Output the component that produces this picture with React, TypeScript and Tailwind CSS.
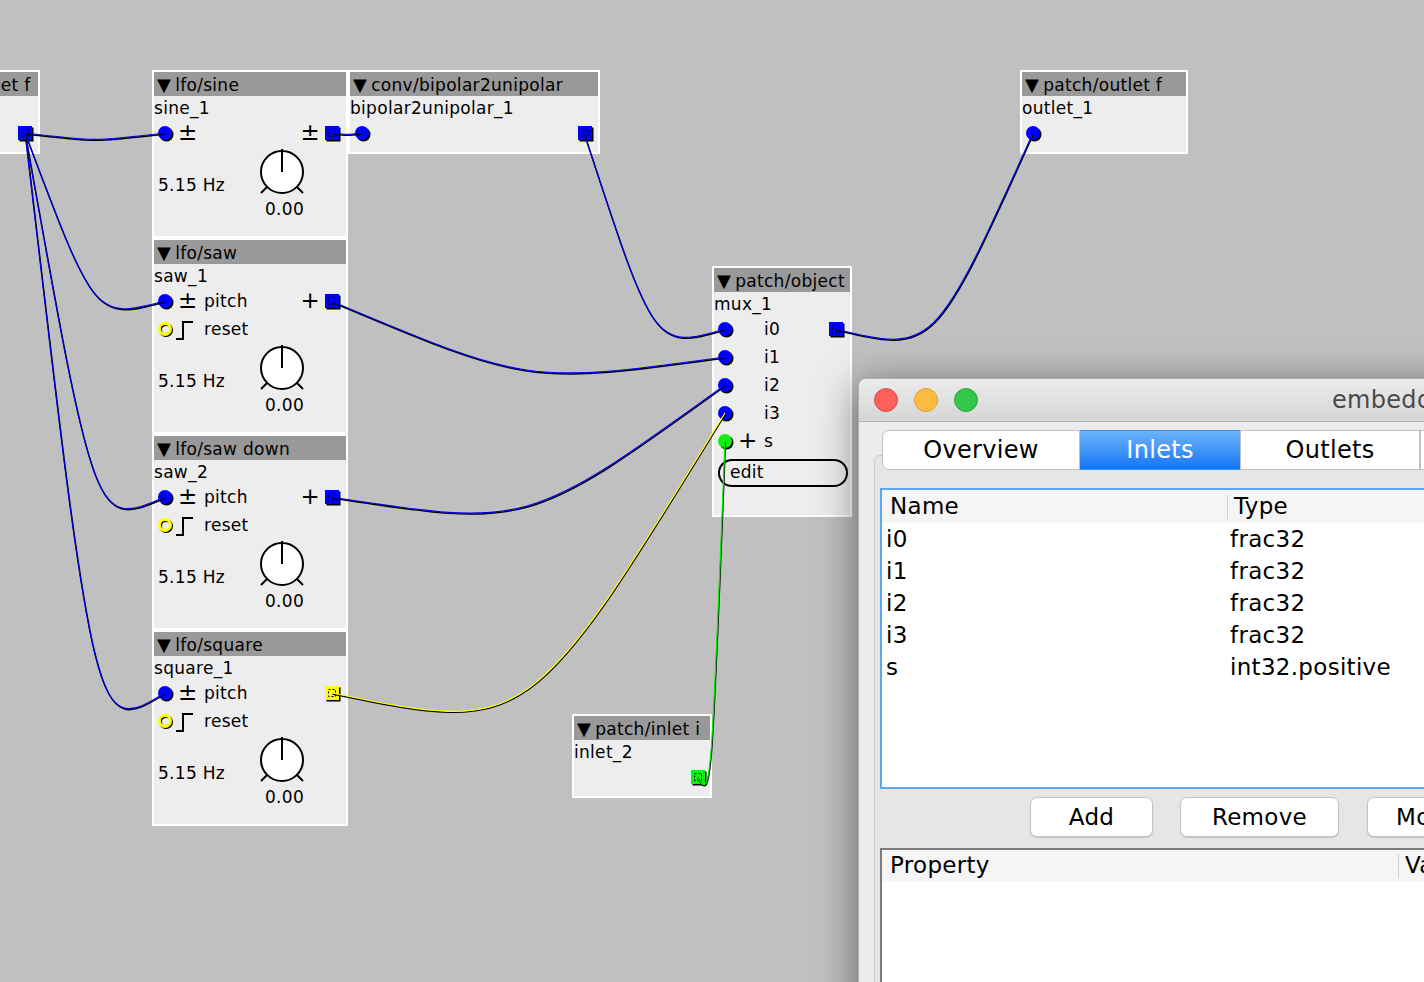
import React from "react";

const canvasFont = "font-['DejaVu_Sans',sans-serif] tracking-[0.3px]";

function InletCircle({ color }: { color: string }) {
  return (
    <svg width="18" height="18" viewBox="0 0 18 18" className="shrink-0">
      <circle cx="9.5" cy="9.5" r="7" fill="#000" />
      <circle cx="8" cy="8" r="7" fill={color} />
    </svg>
  );
}

function BoolInlet() {
  return (
    <svg width="18" height="18" viewBox="0 0 18 18" className="shrink-0">
      <circle cx="9" cy="9" r="5.5" fill="none" stroke="#000" strokeWidth="3" />
      <circle cx="8" cy="8" r="5.5" fill="none" stroke="#ffff00" strokeWidth="3" />
    </svg>
  );
}

function OutletSquare({ color }: { color: string }) {
  return (
    <svg width="18" height="18" viewBox="0 0 18 18" className="shrink-0">
      <rect x="2.5" y="2.5" width="14" height="14" fill="#000" />
      <rect x="1" y="1" width="14" height="14" fill={color} />
      <rect x="4.5" y="4.5" width="7" height="7" fill="none" stroke="#000" strokeWidth="1" strokeDasharray="2 2" />
    </svg>
  );
}

function StepIcon() {
  return (
    <svg width="20" height="22" viewBox="0 0 20 22" className="shrink-0 -ml-[2px]">
      <path d="M0 20 H7 V3 H17" fill="none" stroke="#000" strokeWidth="2" />
    </svg>
  );
}

function Knob() {
  return (
    <svg width="50" height="48" viewBox="0 0 50 48">
      <line x1="11" y1="38" x2="4" y2="45" stroke="#000" strokeWidth="2" />
      <line x1="39" y1="38" x2="46" y2="45" stroke="#000" strokeWidth="2" />
      <circle cx="25" cy="24" r="21" fill="#fff" stroke="#000" strokeWidth="2" />
      <line x1="25" y1="24" x2="25" y2="1" stroke="#000" strokeWidth="2" />
    </svg>
  );
}

function Header({ title }: { title: string }) {
  return (
    <div className="h-[24px] bg-[#999999] pl-[3px] pt-[3px] flex items-center whitespace-nowrap text-[17px] leading-[21px]">
      <span className="text-[18px] mr-[4px] -mt-[2px]">▼</span>
      <span>{title}</span>
    </div>
  );
}

function Name({ name }: { name: string }) {
  return <div className="h-[24px] leading-[24px] text-[17px] whitespace-nowrap">{name}</div>;
}

function LfoBox({
  top,
  title,
  name,
  outSym,
  withReset,
  outColor,
}: {
  top: number;
  title: string;
  name: string;
  outSym: string;
  withReset: boolean;
  outColor: string;
}) {
  return (
    <div
      className={`absolute left-[152px] w-[196px] border-2 border-white bg-[#ededed] ${canvasFont} text-black`}
      style={{ top }}
    >
      <Header title={title} />
      <Name name={name} />
      <div className="h-[28px] flex items-center text-[17px]">
        <div className="pl-[3px]">
          <InletCircle color="#0000ff" />
        </div>
        <span className="ml-[3px] w-[23px] text-[23px] leading-none -mt-[3px]">±</span>
        <span className="ml-[3px]">{withReset ? "pitch" : ""}</span>
        <span className="ml-auto text-[23px] leading-none -mt-[3px] mr-[4px]">{outSym}</span>
        <div className="mr-[4px]">
          <OutletSquare color={outColor} />
        </div>
      </div>
      {withReset && (
        <div className="h-[28px] flex items-center text-[17px]">
          <div className="pl-[3px]">
            <BoolInlet />
          </div>
          <span className="ml-[3px] w-[23px] flex">
            <StepIcon />
          </span>
          <span className="ml-[3px]">reset</span>
        </div>
      )}
      <div className="h-[88px] flex items-start text-[17px]">
        <span className="pl-[4px] mt-[27px] leading-[20px] whitespace-nowrap">5.15 Hz</span>
        <div className="ml-auto mr-[39px] flex flex-col items-center">
          <Knob />
          <span className="mt-[3px] leading-[20px] ml-[5px]">0.00</span>
        </div>
      </div>
    </div>
  );
}

function wirePath(x1: number, y1: number, x2: number, y2: number) {
  const cy = Math.max(y1, y2) + 0.06 * (Math.abs(y2 - y1) + Math.abs(x2 - x1));
  const cx = (x1 + x2) / 2;
  return `M${x1} ${y1} C${cx} ${cy} ${cx} ${cy} ${x2} ${y2}`;
}

const wires: { a: [number, number]; b: [number, number]; c: string }[] = [
  { a: [25, 133], b: [165, 133], c: "#0000e6" },
  { a: [25, 133], b: [165, 301], c: "#0000e6" },
  { a: [25, 133], b: [165, 497], c: "#0000e6" },
  { a: [25, 133], b: [165, 693], c: "#0000e6" },
  { a: [332, 133], b: [362, 133], c: "#0000e6" },
  { a: [584, 133], b: [725, 329], c: "#0000e6" },
  { a: [331, 301], b: [725, 357], c: "#0000e6" },
  { a: [331, 497], b: [725, 385], c: "#0000e6" },
  { a: [332, 693], b: [725, 413], c: "#ffff00" },
  { a: [697, 777], b: [725, 441], c: "#00ee00" },
  { a: [835, 329], b: [1033, 133], c: "#0000e6" },
];

function Wires() {
  return (
    <svg className="absolute left-0 top-0 pointer-events-none" width="1424" height="982">
      {wires.map((w, i) => (
        <g key={i}>
          <path d={wirePath(w.a[0], w.a[1], w.b[0], w.b[1])} transform="translate(0.5 1)" fill="none" stroke="#000" strokeWidth="1.4" />
          <path d={wirePath(w.a[0], w.a[1], w.b[0], w.b[1])} fill="none" stroke={w.c} strokeWidth="1.2" />
        </g>
      ))}
    </svg>
  );
}

function MuxRow({ label, sym, color, outlet }: { label: string; sym?: string; color: string; outlet?: boolean }) {
  return (
    <div className="h-[28px] flex items-center text-[17px]">
      <div className="pl-[3px]">
        <InletCircle color={color} />
      </div>
      <span className="ml-[3px] w-[23px] text-[23px] leading-none -mt-[3px]">{sym ?? ""}</span>
      <span className="ml-[3px]">{label}</span>
      {outlet && (
        <div className="ml-auto mr-[4px]">
          <OutletSquare color="#0000ff" />
        </div>
      )}
    </div>
  );
}

function Dialog() {
  const rows = [
    ["i0", "frac32"],
    ["i1", "frac32"],
    ["i2", "frac32"],
    ["i3", "frac32"],
    ["s", "int32.positive"],
  ];
  const light = "shrink-0 w-[24px] h-[24px] rounded-full";
  const btn =
    "shrink-0 h-[40px] flex items-center bg-white border border-[#c4c4c4] rounded-[7px] shadow-[0_1px_1px_rgba(0,0,0,0.15)]";
  return (
    <div className="absolute left-[858px] top-[378px] w-[640px] h-[640px] rounded-t-[8px] bg-[#ececec] border border-[#b0b0b0] shadow-[0_8px_40px_rgba(0,0,0,0.5)] font-['DejaVu_Sans',sans-serif] overflow-hidden">
      <div className="h-[43px] flex items-center bg-gradient-to-b from-[#ececec] to-[#d6d6d6] border-b border-[#b4b4b4]">
        <div className={`${light} ml-[15px] bg-[#fc605b] border border-[#de4a45]`} />
        <div className={`${light} ml-[16px] bg-[#fdbc40] border border-[#de9f34]`} />
        <div className={`${light} ml-[16px] bg-[#34c84a] border border-[#27aa35]`} />
        <span className="shrink-0 ml-[354px] text-[24px] text-[#4a4a4a] whitespace-nowrap">embedded object</span>
      </div>
      <div className="relative pl-[15px] pt-[8px]">
        <div className="relative z-10 flex ml-[8px] h-[40px] text-[24px] whitespace-nowrap">
          <div className="shrink-0 w-[198px] flex items-center justify-center bg-white border border-[#c2c2c2] rounded-l-[7px] text-black">
            Overview
          </div>
          <div className="shrink-0 w-[160px] flex items-center justify-center bg-gradient-to-b from-[#6cb3fa] to-[#0a74f5] border-y border-[#3f8ef0] text-white">
            Inlets
          </div>
          <div className="shrink-0 w-[180px] flex items-center justify-center bg-white border border-[#c2c2c2] text-black">
            Outlets
          </div>
          <div className="shrink-0 w-[120px] bg-white border border-[#c2c2c2]" />
        </div>
        <div className="-mt-[15px] h-[600px] border border-[#cbcbcb] rounded-[6px] bg-[#e6e6e6] pl-[5px] pt-[32px]">
          <div className="h-[301px] border-2 border-[#5aa7f2] bg-white text-[23px] text-black">
            <div className="h-[33px] flex items-center bg-[#f5f5f5]">
              <span className="shrink-0 pl-[8px] w-[345px]">Name</span>
              <span className="shrink-0 w-[1px] h-[24px] bg-[#cfcfcf]" />
              <span className="pl-[6px]">Type</span>
            </div>
            {rows.map(([n, t]) => (
              <div key={n} className="h-[32px] flex items-center">
                <span className="shrink-0 pl-[4px] w-[348px]">{n}</span>
                <span>{t}</span>
              </div>
            ))}
          </div>
          <div className="flex h-[40px] mt-[8px] text-[23px] text-black whitespace-nowrap">
            <div className={`${btn} ml-[150px] w-[123px] justify-center`}>Add</div>
            <div className={`${btn} ml-[27px] w-[159px] justify-center`}>Remove</div>
            <div className={`${btn} ml-[28px] w-[160px] pl-[28px]`}>Move up</div>
          </div>
          <div className="mt-[11px] h-[200px] border-t-2 border-l-2 border-[#7c7c7c] bg-white text-[23px] text-black">
            <div className="h-[31px] flex items-center bg-[#f5f5f5] whitespace-nowrap">
              <span className="shrink-0 pl-[8px] w-[516px]">Property</span>
              <span className="shrink-0 w-[1px] h-[24px] bg-[#cfcfcf]" />
              <span className="pl-[6px]">Value</span>
            </div>
          </div>
        </div>
      </div>
    </div>
  );
}

export default function App() {
  return (
    <div className={`relative w-[1424px] h-[982px] overflow-hidden bg-[#c0c0c0] ${canvasFont}`}>
      {/* partial inlet box at left */}
      <div className="absolute left-[-99px] top-[70px] w-[139px] h-[84px] border-2 border-white bg-[#ededed]">
        <Header title="patch/inlet f" />
        <Name name="inlet_1" />
        <div className="h-[28px] flex items-center justify-end">
          <div className="mr-[3px]">
            <OutletSquare color="#0000ff" />
          </div>
        </div>
      </div>

      <LfoBox top={70} title="lfo/sine" name="sine_1" outSym="±" withReset={false} outColor="#0000ff" />
      <LfoBox top={238} title="lfo/saw" name="saw_1" outSym="+" withReset outColor="#0000ff" />
      <LfoBox top={434} title="lfo/saw down" name="saw_2" outSym="+" withReset outColor="#0000ff" />
      <LfoBox top={630} title="lfo/square" name="square_1" outSym="" withReset outColor="#ffff00" />

      {/* bipolar2unipolar */}
      <div className="absolute left-[348px] top-[70px] w-[252px] border-2 border-white bg-[#ededed] pb-[4px]">
        <Header title="conv/bipolar2unipolar" />
        <Name name="bipolar2unipolar_1" />
        <div className="h-[28px] flex items-center">
          <div className="pl-[4px]">
            <InletCircle color="#0000ff" />
          </div>
          <div className="ml-auto mr-[3px]">
            <OutletSquare color="#0000ff" />
          </div>
        </div>
      </div>

      {/* patch/outlet f */}
      <div className="absolute left-[1020px] top-[70px] w-[168px] border-2 border-white bg-[#ededed] pb-[4px]">
        <Header title="patch/outlet f" />
        <Name name="outlet_1" />
        <div className="h-[28px] flex items-center">
          <div className="pl-[3px]">
            <InletCircle color="#0000ff" />
          </div>
        </div>
      </div>

      {/* mux */}
      <div className="absolute left-[712px] top-[266px] w-[140px] border-2 border-white bg-[#ededed] pb-[28px]">
        <Header title="patch/object" />
        <Name name="mux_1" />
        <MuxRow label="i0" color="#0000ff" outlet />
        <MuxRow label="i1" color="#0000ff" />
        <MuxRow label="i2" color="#0000ff" />
        <MuxRow label="i3" color="#0000ff" />
        <MuxRow label="s" sym="+" color="#11ee11" />
        <div className="mt-[3px] ml-[4px] mr-[2px] h-[28px] border-2 border-black rounded-full flex items-center pl-[10px] text-[17px]">
          edit
        </div>
      </div>

      {/* patch/inlet i */}
      <div className="absolute left-[572px] top-[714px] w-[140px] border-2 border-white bg-[#ededed] pb-[4px]">
        <Header title="patch/inlet i" />
        <Name name="inlet_2" />
        <div className="h-[28px] flex items-center justify-end">
          <div className="mr-[2px]">
            <OutletSquare color="#11ee11" />
          </div>
        </div>
      </div>

      <Wires />
      <Dialog />
    </div>
  );
}
